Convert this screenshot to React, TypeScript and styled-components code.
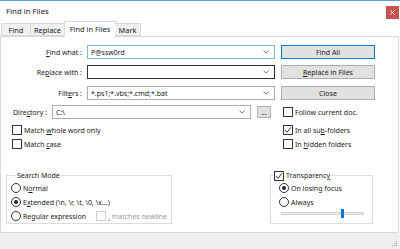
import React from "react";
import styled, { createGlobalStyle } from "styled-components";

const Global = createGlobalStyle`
  html, body { margin: 0; padding: 0; background: #fff; }
  body {
    font-family: "Noto Sans", "Open Sans", sans-serif;
    font-size: 7px;
    color: #1a1a1a;
  }
  * { box-sizing: border-box; }
  u { text-decoration-thickness: 1px; text-underline-offset: 1px; }
`;

const Window = styled.div`
  width: 400px;
  height: 249px;
  display: flex;
  flex-direction: column;
  background: #fff;
  border-top: 1px solid #5aa0e0;
  overflow: hidden;
`;

const TitleBar = styled.div`
  height: 20px;
  display: flex;
  align-items: center;
  justify-content: space-between;
  padding-left: 6px;
  font-size: 7.8px;
`;

const CloseBtn = styled.div`
  width: 13px;
  height: 13px;
  margin-right: 1px;
  align-self: flex-start;
  margin-top: 5px;
  background: #c75050;
  display: flex;
  align-items: center;
  justify-content: center;
`;

const TabStrip = styled.div`
  height: 15px;
  display: flex;
  align-items: flex-end;
  padding-left: 1px;
  position: relative;
  z-index: 1;
`;

const Tab = styled.div<{ $w: number; $active?: boolean }>`
  width: ${(p) => p.$w}px;
  height: ${(p) => (p.$active ? 16 : 13)}px;
  margin-bottom: ${(p) => (p.$active ? -1 : 0)}px;
  margin-left: ${(p) => (p.$active ? -1 : 0)}px;
  margin-right: ${(p) => (p.$active ? -1 : 0)}px;
  background: ${(p) => (p.$active ? "#fff" : "#f0f0f0")};
  border: 1px solid #d9d9d9;
  border-bottom: ${(p) => (p.$active ? "none" : "1px solid #d9d9d9")};
  border-left-width: ${(p) => (p.$active ? 1 : 0)}px;
  display: flex;
  align-items: center;
  justify-content: center;
  padding-bottom: ${(p) => (p.$active ? 2 : 0)}px;
  font-size: 7.4px;
  &:first-child { border-left-width: 1px; }
`;

const Panel = styled.div`
  height: 197px;
  border: 1px solid #d9d9d9;
  margin-right: 1px;
  padding-top: 8px;
  display: flex;
  flex-direction: column;
`;

const Row = styled.div<{ $mt?: number; $pl?: number }>`
  display: flex;
  align-items: center;
  height: 14px;
  margin-top: ${(p) => p.$mt ?? 0}px;
  padding-left: ${(p) => p.$pl ?? 0}px;
`;

const FieldLabel = styled.div<{ $w: number; $right?: boolean }>`
  width: ${(p) => p.$w}px;
  text-align: ${(p) => (p.$right ? "right" : "left")};
  white-space: nowrap;
  flex-shrink: 0;
`;

const Combo = styled.div<{ $w: number; $border: string; $ml: number }>`
  width: ${(p) => p.$w}px;
  height: 14px;
  margin-left: ${(p) => p.$ml}px;
  border: 1px solid ${(p) => p.$border};
  display: flex;
  align-items: center;
  justify-content: space-between;
  padding: 0 5px 0 3px;
  background: #fff;
  flex-shrink: 0;
`;

const Button = styled.div<{ $w: number; $h?: number; $ml: number; $default?: boolean }>`
  width: ${(p) => p.$w}px;
  height: ${(p) => p.$h ?? 14}px;
  margin-left: ${(p) => p.$ml}px;
  background: #e1e1e1;
  border: 1px solid ${(p) => (p.$default ? "#0078d7" : "#adadad")};
  display: flex;
  align-items: center;
  justify-content: center;
  flex-shrink: 0;
`;

const CheckLine = styled.label<{ $ml?: number; $disabled?: boolean }>`
  display: flex;
  align-items: center;
  height: 14px;
  margin-left: ${(p) => p.$ml ?? 0}px;
  color: ${(p) => (p.$disabled ? "#9a9a9a" : "inherit")};
  white-space: nowrap;
`;

const Box = styled.span<{ $disabled?: boolean }>`
  width: 10px;
  height: 10px;
  border: 1px solid ${(p) => (p.$disabled ? "#cfcfcf" : "#333")};
  background: #fff;
  margin-right: 2px;
  display: flex;
  align-items: center;
  justify-content: center;
  flex-shrink: 0;
`;

const Radio = styled.span<{ $on?: boolean }>`
  width: 10px;
  height: 10px;
  border: 1px solid #333;
  border-radius: 50%;
  background: #fff;
  margin-right: 2px;
  display: flex;
  align-items: center;
  justify-content: center;
  flex-shrink: 0;
  &::after {
    content: "";
    width: 4px;
    height: 4px;
    border-radius: 50%;
    background: ${(p) => (p.$on ? "#222" : "transparent")};
  }
`;

const Columns = styled.div`
  display: flex;
  margin-top: 4px;
`;

const Col = styled.div<{ $w?: number; $pl?: number }>`
  display: flex;
  flex-direction: column;
  width: ${(p) => (p.$w ? `${p.$w}px` : "auto")};
  padding-left: ${(p) => p.$pl ?? 0}px;
`;

const Groups = styled.div`
  display: flex;
  margin-top: 19px;
  padding-left: 5px;
`;

const Group = styled.fieldset<{ $w: number; $ml?: number; $pl: number }>`
  width: ${(p) => p.$w}px;
  min-width: 0;
  height: 54px;
  margin: 0 0 0 ${(p) => p.$ml ?? 0}px;
  padding: 0 0 0 ${(p) => p.$pl}px;
  border: 1px solid #dcdcdc;
  display: flex;
  flex-direction: column;
  flex-shrink: 0;
`;

const Legend = styled.legend<{ $ml: number }>`
  padding: 0 1px;
  margin-left: ${(p) => p.$ml}px;
  height: 11px;
  line-height: 11px;
  display: flex;
  align-items: center;
`;

const SliderRow = styled.div`
  height: 10px;
  display: flex;
  align-items: center;
  padding-left: 2px;
  margin-top: -1px;
`;

const Track = styled.div`
  width: 83px;
  height: 3px;
  background: #e7e7e7;
  border: 1px solid #d6d6d6;
  position: relative;
`;

const Thumb = styled.div`
  position: absolute;
  top: -4px;
  width: 3px;
  height: 9px;
  background: #0078d7;
`;

const Footer = styled.div`
  flex: 1;
  background: #f0f0f0;
  display: flex;
  align-items: flex-end;
  justify-content: flex-end;
  padding: 0 2px 2px 0;
`;

const Chevron = () => (
  <svg width="6" height="4" viewBox="0 0 6 4">
    <path d="M0.5 0.5 L3 3 L5.5 0.5" fill="none" stroke="#6d6d6d" strokeWidth="0.9" />
  </svg>
);

const Tick = () => (
  <svg width="8" height="8" viewBox="0 0 8 8">
    <path d="M1 4 L3 6.3 L7 1.3" fill="none" stroke="#333" strokeWidth="1" />
  </svg>
);

const Check = ({
  children,
  checked,
  disabled,
  ml,
}: {
  children: React.ReactNode;
  checked?: boolean;
  disabled?: boolean;
  ml?: number;
}) => (
  <CheckLine $ml={ml} $disabled={disabled}>
    <Box $disabled={disabled}>{checked && <Tick />}</Box>
    <span>{children}</span>
  </CheckLine>
);

const RadioLine = ({ children, on }: { children: React.ReactNode; on?: boolean }) => (
  <CheckLine>
    <Radio $on={on} />
    <span>{children}</span>
  </CheckLine>
);

export default function App() {
  return (
    <>
      <Global />
      <Window>
        <TitleBar>
          <span>Find in Files</span>
          <CloseBtn>
            <svg width="5" height="5" viewBox="0 0 5 5">
              <path d="M0.5 0.5 L4.5 4.5 M4.5 0.5 L0.5 4.5" stroke="#fff" strokeWidth="1" />
            </svg>
          </CloseBtn>
        </TitleBar>
        <TabStrip>
          <Tab $w={30}>Find</Tab>
          <Tab $w={34}>Replace</Tab>
          <Tab $w={52} $active>Find in Files</Tab>
          <Tab $w={26}>Mark</Tab>
        </TabStrip>
        <Panel>
          <Row>
            <FieldLabel $w={81} $right>
              <u>F</u>ind what :
            </FieldLabel>
            <Combo $w={188} $ml={5} $border="#7eb4ea">
              <span>P@ssw0rd</span>
              <Chevron />
            </Combo>
            <Button $w={94} $ml={6} $default>
              Find All
            </Button>
          </Row>
          <Row $mt={6}>
            <FieldLabel $w={81} $right>
              Re<u>p</u>lace with :
            </FieldLabel>
            <Combo $w={188} $ml={5} $border="#333">
              <span />
              <Chevron />
            </Combo>
            <Button $w={94} $ml={6}>
              <span>
                <u>R</u>eplace in Files
              </span>
            </Button>
          </Row>
          <Row $mt={7}>
            <FieldLabel $w={81} $right>
              Filt<u>e</u>rs :
            </FieldLabel>
            <Combo $w={188} $ml={5} $border="#acacac">
              <span>*.ps1;*.vbs;*.cmd;*.bat</span>
              <Chevron />
            </Combo>
            <Button $w={94} $ml={6}>
              Close
            </Button>
          </Row>
          <Row $mt={5} $pl={12}>
            <FieldLabel $w={39}>
              Dire<u>c</u>tory :
            </FieldLabel>
            <Combo $w={199} $ml={0} $border="#acacac">
              <span>C:\</span>
              <Chevron />
            </Combo>
            <Button $w={14} $h={12} $ml={6}>
              ...
            </Button>
            <Check ml={12}>Follow current doc.</Check>
          </Row>
          <Columns>
            <Col $w={282} $pl={11}>
              <Check>
                Match <u>w</u>hole word only
              </Check>
              <Check>
                Match <u>c</u>ase
              </Check>
            </Col>
            <Col>
              <Check checked>
                In all su<u>b</u>-folders
              </Check>
              <Check>
                In <u>h</u>idden folders
              </Check>
            </Col>
          </Columns>
          <Groups>
            <Group $w={166} $pl={4}>
              <Legend $ml={5}>Search Mode</Legend>
              <RadioLine>
                N<u>o</u>rmal
              </RadioLine>
              <RadioLine on>
                E<u>x</u>tended (\n, \r, \t, \0, \x...)
              </RadioLine>
              <CheckLine>
                <Radio />
                <span>
                  Re<u>g</u>ular expression
                </span>
                <Check disabled ml={10}>
                  <u>.</u> matches newline
                </Check>
              </CheckLine>
            </Group>
            <Group $w={103} $ml={98} $pl={8}>
              <Legend $ml={-6}>
                <Box>
                  <Tick />
                </Box>
                Transparenc<u>y</u>
              </Legend>
              <RadioLine on>On losing focus</RadioLine>
              <RadioLine>Always</RadioLine>
              <SliderRow>
                <Track>
                  <Thumb style={{ left: `${Math.round(0.71 * 83)}px` }} />
                </Track>
              </SliderRow>
            </Group>
          </Groups>
        </Panel>
        <Footer>
          <svg width="6" height="6" viewBox="0 0 6 6">
            <rect x="4" y="0" width="1.2" height="1.2" fill="#aaa" />
            <rect x="2" y="2" width="1.2" height="1.2" fill="#aaa" />
            <rect x="4" y="2" width="1.2" height="1.2" fill="#aaa" />
            <rect x="0" y="4" width="1.2" height="1.2" fill="#aaa" />
            <rect x="2" y="4" width="1.2" height="1.2" fill="#aaa" />
            <rect x="4" y="4" width="1.2" height="1.2" fill="#aaa" />
          </svg>
        </Footer>
      </Window>
    </>
  );
}
